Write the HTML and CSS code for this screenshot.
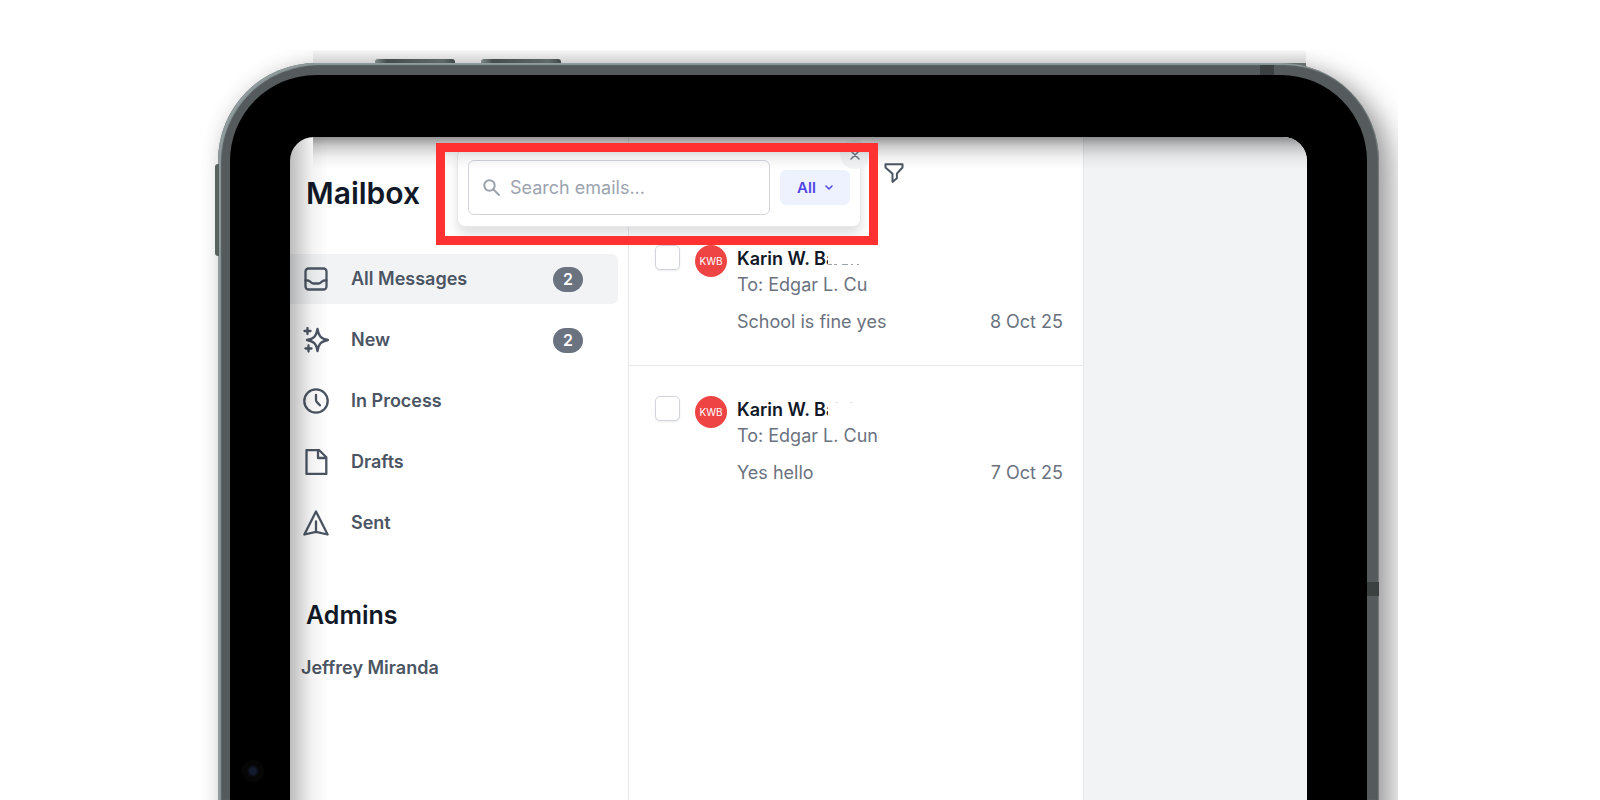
FILE: index.html
```html
<!DOCTYPE html>
<html lang="en">
<head>
  <meta charset="utf-8" />
  <meta name="viewport" content="width=device-width, initial-scale=1" />
  <title>Mailbox</title>
  <link rel="stylesheet" href="styles.css">
</head>
<body>
<div class="stage">
  <div class="tablet">
    <span class="tablet-key tablet-key--one"></span>
    <span class="tablet-key tablet-key--two"></span>
    <span class="tablet-key tablet-key--side"></span>
    <span class="tablet-glow"></span>
    <div class="tablet-body">
      <span class="tablet-band tablet-band--top"></span>
      <span class="tablet-band tablet-band--side"></span>
      <div class="tablet-bezel">
        <span class="tablet-camera"></span>
        <div class="screen">
          <aside class="sidebar">
            <h1 class="sidebar-title">Mailbox</h1>
            <nav class="menu">
              <a class="menu-item menu-item--active" href="#all">
                <svg class="menu-icon" viewBox="0 0 26 26"><rect x="2.500" y="2.500" width="21" height="21" rx="3"/><path d="M2.500 14.500h2.200c1.300 0 1.900.5 2.600 1.300.9 1 1.600 1.700 2.900 1.700h5.600c1.300 0 2-.7 2.900-1.700.7-.8 1.300-1.300 2.600-1.300h2.200"/></svg>
                <span class="menu-label">All Messages</span>
                <span class="badge">2</span>
              </a>
              <a class="menu-item" href="#new">
                <svg class="menu-icon" viewBox="0 0 26 26"><path d="M14.500 2c1.200 7 3.400 9.800 10.500 11-7.100 1.200-9.300 4-10.500 11-1.200-7-3.400-9.800-10.500-11 7.100-1.200 9.300-4 10.500-11z"/><path d="M4.500 1v6M1.500 4h6M5.500 18.500v6M2.500 21.500h6"/></svg>
                <span class="menu-label">New</span>
                <span class="badge">2</span>
              </a>
              <a class="menu-item" href="#process">
                <svg class="menu-icon" viewBox="0 0 26 26"><circle cx="13" cy="13" r="11.700"/><path d="M13 7v5q0 1.200.9 2.100l3 3.200"/></svg>
                <span class="menu-label">In Process</span>
              </a>
              <a class="menu-item" href="#drafts">
                <svg class="menu-icon" viewBox="0 0 26 26"><path d="M3.500 1h12.500l7.300 7.300v16.700H3.500zM15 1v8h8.300"/></svg>
                <span class="menu-label">Drafts</span>
              </a>
              <a class="menu-item" href="#sent">
                <svg class="menu-icon" viewBox="0 0 26 26"><path d="M13 1.500 24.600 24.500 13 21.800 1.400 24.500zM13 11.500v10"/></svg>
                <span class="menu-label">Sent</span>
              </a>
            </nav>
            <h2 class="sidebar-subtitle">Admins</h2>
            <a class="admin" href="#admin">Jeffrey Miranda</a>
          </aside>

          <main class="inbox">
            <button class="filter" type="button" aria-label="Filter">
              <svg class="filter-icon" viewBox="0 0 20 20"><path d="M1.500 1.200h17v3.300l-5.600 6.200v4.600l-4.400 3.600v-8.200L1.500 4.500z"/></svg>
            </button>
            <article class="mail">
              <input class="mail-check" type="checkbox" aria-label="Select message" />
              <span class="avatar">KWB</span>
              <div class="mail-content">
                <p class="mail-from mail-from--low"><span class="mail-name">Karin W. Ba</span></p>
                <p class="mail-to">To: Edgar L. Cu</p>
                <p class="mail-last"><span>School is fine yes</span><time>8 Oct 25</time></p>
              </div>
            </article>
            <article class="mail">
              <input class="mail-check" type="checkbox" aria-label="Select message" />
              <span class="avatar">KWB</span>
              <div class="mail-content">
                <p class="mail-from mail-from--high"><span class="mail-name">Karin W. Ba</span></p>
                <p class="mail-to mail-to--cut">To: Edgar L. Cunc</p>
                <p class="mail-last"><span>Yes hello</span><time>7 Oct 25</time></p>
              </div>
            </article>
          </main>

          <section class="reader"></section>

          <form class="search">
            <label class="search-box">
              <svg class="search-icon" viewBox="0 0 17 17"><circle cx="6.500" cy="6.500" r="5.200"/><path d="m10.500 10.500 5.500 5.500"/></svg>
              <input class="search-input" type="text" placeholder="Search emails..." aria-label="Search emails" />
            </label>
            <button class="scope" type="button">All
              <svg class="scope-icon" viewBox="0 0 8 6"><path d="m1 1 3 3 3-3"/></svg>
            </button>
            <button class="close" type="button" aria-label="Close">
              <svg class="close-icon" viewBox="0 0 10 10"><path d="m1 1 8 8M9 1 1 9"/></svg>
            </button>
          </form>
          <div class="screen-shade"></div>
          <div class="highlight"></div>
        </div>
      </div>
    </div>
  </div>
</div>
</body>
</html>
```
FILE: styles.css
```css
:root {
  --ink: #111827;
  --slate: #4b5563;
  --muted: #6b7280;
  --line: #e5e7eb;
  --panel: #f2f3f5;
  --indigo: #4f46e5;
  --metal: #555b5d;
}
* {
  box-sizing: border-box;
}
body {
  margin: 0;
  background: #fff;
  font-family: Inter, "Liberation Sans", sans-serif;
  font-size: 18px;
  line-height: 26px;
  color: var(--slate);
}
h1, h2, p {
  margin: 0;
}
a {
  color: inherit;
  text-decoration: none;
}
button {
  border: 0;
  padding: 0;
  font: inherit;
  cursor: pointer;
}
svg {
  display: block;
  fill: none;
  stroke: currentColor;
  stroke-width: 2;
  stroke-linecap: round;
  stroke-linejoin: round;
}

/* tablet frame */
.stage {
  display: flex;
  height: 100vh;
  padding: 63px 221px 0 218px;
  overflow: hidden;
}
.tablet {
  position: relative;
  display: flex;
  flex: 1;
}
.tablet::before {
  content: "";
  position: absolute;
  inset: 0 0 -60px;
  border-radius: 98px 98px 0 0;
  box-shadow: 14px 10px 28px rgba(0, 0, 0, .34), 0 0 20px rgba(0, 0, 0, .1);
  clip-path: inset(-13px -19px 0 -20px);
}
.tablet-glow {
  position: absolute;
  top: -13px;
  left: 95px;
  right: 73px;
  height: 17px;
  background: linear-gradient(#f7f7f7, #d0d0d0 13px, #66706f 13px);
}
.tablet-key {
  position: absolute;
  top: -4px;
  z-index: 1;
  width: 80px;
  height: 4px;
  border-radius: 3px 3px 0 0;
  background: linear-gradient(90deg, #7d8987, #454d4c 12px, #5f6967 68px, #3f4746);
}
.tablet-key--one {
  left: 157px;
}
.tablet-key--two {
  left: 263px;
}
.tablet-key--side {
  top: 101px;
  left: -3px;
  width: 4px;
  height: 92px;
  border-radius: 3px 0 0 3px;
  background: #59615f;
}
.tablet-body {
  position: relative;
  display: flex;
  flex: 1;
  padding: 12px 12px 0;
  border-radius: 98px 98px 0 0;
  background: var(--metal);
  box-shadow: inset 3px 2px 1px #8f9b9c, inset -1px 0 1px #777f80;
}
.tablet-band {
  position: absolute;
  background: #3b4041;
}
.tablet-band--top {
  top: 2px;
  right: 105px;
  width: 14px;
  height: 12px;
}
.tablet-band--side {
  top: 519px;
  right: 0;
  width: 12px;
  height: 14px;
}
.tablet-bezel {
  position: relative;
  display: flex;
  flex: 1;
  padding: 62px 60px 0;
  border-radius: 86px 86px 0 0;
  background: #000;
}
.tablet-camera {
  position: absolute;
  top: 685px;
  left: 12px;
  width: 22px;
  height: 22px;
  border-radius: 50%;
  background: radial-gradient(circle, #131b2e 3px, #0a0d15 5px, #060606 6px);
}

/* screen */
.screen {
  position: relative;
  display: grid;
  grid-template-columns: 1fr 456px 223px;
  flex: 1;
  border-radius: 24px 24px 0 0;
  background: #fff;
  overflow: hidden;
}
.screen-shade {
  position: absolute;
  inset: 0;
  pointer-events: none;
  background:
    linear-gradient(rgba(0, 0, 0, .42), rgba(0, 0, 0, .2) 9px, rgba(0, 0, 0, .06) 20px, transparent 32px) 23px 0 no-repeat,
    linear-gradient(90deg, rgba(0, 0, 0, .26), rgba(0, 0, 0, .16) 10px, rgba(0, 0, 0, .05) 22px, transparent 38px);
}
.highlight {
  position: absolute;
  top: 6px;
  left: 146px;
  width: 442px;
  height: 102px;
  border: 9px solid #ff3131;
  pointer-events: none;
}

.sidebar {
  padding: 36px 10px 0 0;
}
.sidebar-title {
  padding-left: 16px;
  font-size: 30px;
  line-height: 40px;
  font-weight: 600;
  color: var(--ink);
}
.menu {
  display: grid;
  gap: 11px;
  margin-top: 41px;
}
.menu-item {
  display: flex;
  align-items: center;
  height: 50px;
  padding: 0 35px 0 13px;
  border-radius: 0 6px 6px 0;
  font-weight: 600;
}
.menu-item--active {
  background: var(--panel);
}
.menu-icon {
  width: 26px;
  height: 26px;
  stroke-width: 2.3;
}
.menu-label {
  flex: 1;
  margin-left: 22px;
}
.badge {
  width: 30px;
  height: 25px;
  border-radius: 13px;
  background: var(--muted);
  color: #fff;
  font-size: 16px;
  line-height: 25px;
  text-align: center;
}
.sidebar-subtitle {
  margin-top: 49px;
  padding-left: 16px;
  font-size: 25px;
  line-height: 36px;
  font-weight: 600;
  color: var(--ink);
}
.admin {
  display: block;
  margin: 22px 0 0 11px;
  font-weight: 600;
}

/* message list */
.inbox {
  border: solid var(--line);
  border-width: 0 1px;
}
.filter {
  display: block;
  margin: 26px 0 0 255px;
  background: none;
  color: var(--slate);
}
.filter-icon {
  width: 20px;
  height: 20px;
}
.mail {
  display: flex;
  height: 151px;
  padding: 30px 20px 0 26px;
}
.filter + .mail {
  margin-top: 32px;
  border-bottom: 1px solid var(--line);
}
.mail-check {
  appearance: none;
  width: 25px;
  height: 25px;
  margin: 0 15px 0 0;
  border: 1px solid #d1d5db;
  border-radius: 5px;
  background: #fff;
  box-shadow: 0 1px 2px rgba(0, 0, 0, .08);
}
.avatar {
  width: 32px;
  height: 32px;
  margin-right: 10px;
  border-radius: 50%;
  background: #ef4444;
  color: #fff;
  font-size: 10px;
  line-height: 32px;
  text-align: center;
}
.mail-content {
  flex: 1;
  padding-top: 1px;
  color: var(--muted);
}
.mail-from {
  height: 26px;
  font-weight: 600;
  color: var(--ink);
}
.mail-name {
  display: block;
  width: 91px;
  overflow: hidden;
  white-space: nowrap;
}
.mail-from--low {
  background:
    linear-gradient(#9ca3af, #9ca3af) 91px 18px / 4px 1px no-repeat,
    linear-gradient(#9ca3af, #9ca3af) 97px 18px / 3px 1px no-repeat,
    linear-gradient(#9ca3af, #9ca3af) 105px 18px / 6px 1px no-repeat,
    linear-gradient(#9ca3af, #9ca3af) 114px 18px / 2px 1px no-repeat,
    linear-gradient(#9ca3af, #9ca3af) 120px 18px / 2px 1px no-repeat;
}
.mail-from--high {
  background:
    linear-gradient(#e5e7eb, #e5e7eb) 98px 5px / 3px 1px no-repeat,
    linear-gradient(#e5e7eb, #e5e7eb) 113px 5px / 3px 1px no-repeat;
}
.mail-to--cut {
  width: 142px;
  overflow: hidden;
  white-space: nowrap;
}
.mail-last {
  display: flex;
  justify-content: space-between;
  margin-top: 11px;
}
.reader {
  background: var(--panel);
}

/* floating search */
.search {
  position: absolute;
  top: 11px;
  left: 167px;
  display: flex;
  align-items: center;
  width: 404px;
  height: 79px;
  padding: 0 10px;
  border: 1px solid var(--line);
  border-radius: 8px;
  background: #fff;
  box-shadow: 0 8px 12px rgba(0, 0, 0, .12);
}
.search-box {
  display: flex;
  flex: 1;
  align-items: center;
  min-width: 0;
  height: 55px;
  padding: 0 14px;
  border: 1px solid #d1d5db;
  border-radius: 6px;
}
.search-icon {
  flex: none;
  width: 17px;
  height: 17px;
  margin-right: 10px;
  color: #9ca3af;
}
.search-input {
  flex: 1;
  min-width: 0;
  padding: 0;
  border: 0;
  outline: 0;
  background: none;
  font: inherit;
}
.search-input::placeholder {
  color: #9ca3af;
}
.scope {
  display: flex;
  flex: none;
  align-items: center;
  justify-content: center;
  gap: 9px;
  width: 70px;
  height: 35px;
  margin-left: 10px;
  border-radius: 6px;
  background: #eef2ff;
  color: var(--indigo);
  font-size: 15px;
  font-weight: 600;
}
.scope-icon {
  width: 8px;
  height: 6px;
  stroke-width: 1.5;
}
.close {
  position: absolute;
  top: -9px;
  right: -9px;
  display: grid;
  place-items: center;
  width: 29px;
  height: 29px;
  border-radius: 50%;
  background: #f3f4f6;
  color: var(--muted);
}
.close-icon {
  width: 10px;
  height: 10px;
  stroke-width: 1.5;
}
```
